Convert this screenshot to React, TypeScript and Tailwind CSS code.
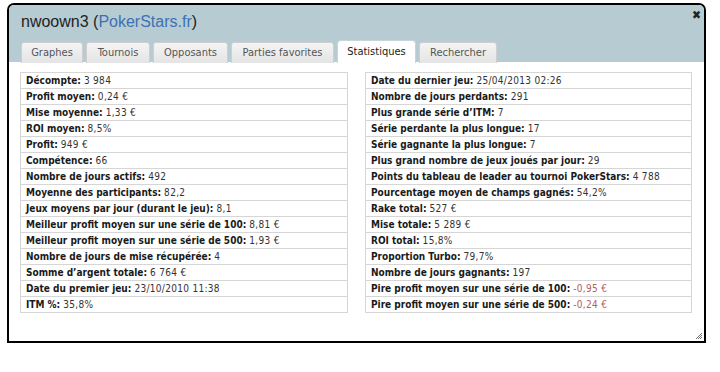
const tabs = [
  { label: 'Graphes', w: 'w-[62px]' },
  { label: 'Tournois', w: 'w-[64px]' },
  { label: 'Opposants', w: 'w-[75px]' },
  { label: 'Parties favorites', w: 'w-[103px]' },
  { label: 'Statistiques', w: 'w-[79px]', active: true },
  { label: 'Rechercher', w: 'w-[78px]' },
];

type Stat = { label: string; value: string; negative?: boolean };

const leftStats: Stat[] = [
  { label: 'Décompte', value: '3 984' },
  { label: 'Profit moyen', value: '0,24 €' },
  { label: 'Mise moyenne', value: '1,33 €' },
  { label: 'ROI moyen', value: '8,5%' },
  { label: 'Profit', value: '949 €' },
  { label: 'Compétence', value: '66' },
  { label: 'Nombre de jours actifs', value: '492' },
  { label: 'Moyenne des participants', value: '82,2' },
  { label: 'Jeux moyens par jour (durant le jeu)', value: '8,1' },
  { label: 'Meilleur profit moyen sur une série de 100', value: '8,81 €' },
  { label: 'Meilleur profit moyen sur une série de 500', value: '1,93 €' },
  { label: 'Nombre de jours de mise récupérée', value: '4' },
  { label: 'Somme d’argent totale', value: '6 764 €' },
  { label: 'Date du premier jeu', value: '23/10/2010 11:38' },
  { label: 'ITM %', value: '35,8%' },
];

const rightStats: Stat[] = [
  { label: 'Date du dernier jeu', value: '25/04/2013 02:26' },
  { label: 'Nombre de jours perdants', value: '291' },
  { label: 'Plus grande série d’ITM', value: '7' },
  { label: 'Série perdante la plus longue', value: '17' },
  { label: 'Série gagnante la plus longue', value: '7' },
  { label: 'Plus grand nombre de jeux joués par jour', value: '29' },
  { label: 'Points du tableau de leader au tournoi PokerStars', value: '4 788' },
  { label: 'Pourcentage moyen de champs gagnés', value: '54,2%' },
  { label: 'Rake total', value: '527 €' },
  { label: 'Mise totale', value: '5 289 €' },
  { label: 'ROI total', value: '15,8%' },
  { label: 'Proportion Turbo', value: '79,7%' },
  { label: 'Nombre de jours gagnants', value: '197' },
  { label: 'Pire profit moyen sur une série de 100', value: '-0,95 €', negative: true },
  { label: 'Pire profit moyen sur une série de 500', value: '-0,24 €', negative: true },
];

const StatTable = ({ stats, width }: { stats: Stat[]; width: string }) => (
  <div className={`${width} border border-[#d6d6d6] border-b-0`}>
    {stats.map((s) => (
      <div
        key={s.label}
        className="flex h-[16px] items-center border-b border-[#d6d6d6] px-[5px] text-[10px] leading-none whitespace-nowrap"
      >
        <span className="font-bold text-[#1a1a1a]">{s.label}: </span>
        <span className={`ml-[3px] tracking-[0.3px] ${s.negative ? 'text-[#b06060]' : 'text-[#333]'}`}>{s.value}</span>
      </div>
    ))}
  </div>
);

export default function App() {
  return (
    <div className="h-[372px] w-[720px] bg-white pt-[3px] pl-[7px] [font-family:'DejaVu_Sans_Condensed','DejaVu_Sans',sans-serif]">
      <div className="relative h-[340px] w-[699px] rounded-t-[7px] border-2 border-black bg-white">
        <div className="h-[57px] rounded-t-[5px] bg-[#b6ccd2] pl-[12px]">
          <div className="pt-[7px] text-[16px] leading-[20px] text-[#222] [font-family:'Liberation_Sans',Arial,sans-serif]">
            nwoown3 (<span className="text-[#3d71b2]">PokerStars.fr</span>)
          </div>
          <div className="mt-[8px] flex items-end gap-[3px]">
            {tabs.map((t) =>
              t.active ? (
                <div
                  key={t.label}
                  className={`${t.w} flex h-[23px] items-center justify-center rounded-t-[4px] border border-b-0 border-[#c8d4d8] bg-white text-[11px] text-[#222]`}
                >
                  {t.label}
                </div>
              ) : (
                <div
                  key={t.label}
                  className={`${t.w} flex h-[21px] items-center justify-center rounded-t-[3px] border border-b-0 border-[#cfcfcf] bg-gradient-to-b from-[#f4f4f4] to-[#e4e4e4] text-[11px] text-[#555]`}
                >
                  {t.label}
                </div>
              )
            )}
          </div>
        </div>
        <div className="flex gap-[17px] pt-[10px] pl-[11px]">
          <StatTable stats={leftStats} width="w-[328px]" />
          <StatTable stats={rightStats} width="w-[327px]" />
        </div>
        <span className="absolute top-[4px] right-[3px] text-[12px] leading-none font-bold text-[#222]">✖</span>
        <svg className="absolute right-[1px] bottom-[1px]" width="8" height="8" viewBox="0 0 8 8">
          <path d="M7 1 L1 7 M7 3 L3 7 M7 5 L5 7" stroke="#777" strokeWidth="1" />
        </svg>
      </div>
    </div>
  );
}
